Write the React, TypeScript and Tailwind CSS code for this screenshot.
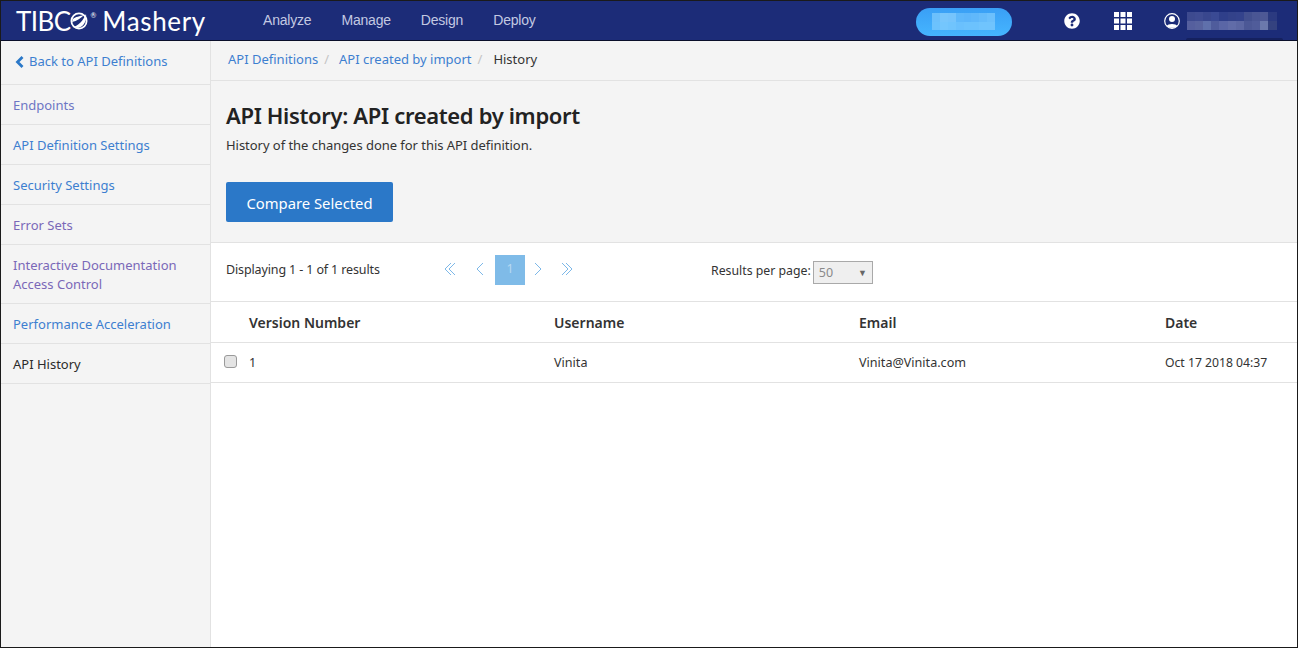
import { FC } from "react";
import { FaQuestionCircle } from "react-icons/fa";

const navItems = ["Analyze", "Manage", "Design", "Deploy"];

const sideItems = [
    { label: "Endpoints", className: "h-10 text-[#6d76c4]" },
    { label: "API Definition Settings", className: "h-10 text-[#3d7fd0]" },
    { label: "Security Settings", className: "h-10 text-[#3d7fd0]" },
    { label: "Error Sets", className: "h-10 text-[#7a68b8]" },
    { label: "Interactive Documentation Access Control", className: "h-[59px] text-[#7a68b8]" },
    { label: "Performance Acceleration", className: "h-10 text-[#3d7fd0]" },
    { label: "API History", className: "h-10 text-[#2b2b2b]" },
];

const userBlur = [
    ["bg-[#3d4a8f]", "bg-[#3f4c92]", "bg-[#39478e]", "bg-[#3a4a94]", "bg-[#2f3f8a]", "bg-[#33428a]", "bg-[#34438c]", "bg-[#43508f]", "bg-[#4a5694]", "bg-[#4d5895]", "bg-[#2b3a80]"],
    ["bg-[#555f9e]", "bg-[#58639f]", "bg-[#5f70ab]", "bg-[#4f5c9c]", "bg-[#5a66a6]", "bg-[#616ca8]", "bg-[#5c67a3]", "bg-[#4c5896]", "bg-[#505c9a]", "bg-[#6b79ac]", "bg-[#34427f]"],
];

const buttonBlur = [
    ["bg-[#6cc0fc]", "bg-[#78c6fc]", "bg-[#76c4fc]", "bg-[#5fb8fb]", "bg-[#5db6fb]", "bg-[#60b8fb]", "bg-[#66bcfb]", "bg-[#6cc0fc]"],
    ["bg-[#6cc2fd]", "bg-[#74c6fd]", "bg-[#70c4fd]", "bg-[#6ac0fd]", "bg-[#6cc2fd]", "bg-[#6cc2fd]", "bg-[#70c4fd]", "bg-[#70c4fd]"],
];

const Logo: FC = () => (
    <div className="ml-[15px] flex w-[247px] items-center pt-px text-white font-['Lato',sans-serif]">
        <span className="text-[26px] leading-none tracking-[-0.6px]">TIBC</span>
        <svg width="18" height="18" viewBox="0 0 18 18">
            <circle cx="9" cy="9" r="7.6" fill="none" stroke="#fff" strokeWidth="1.8" />
            <path d="M3 15 C8 14 13 9 16 2 C17 8 14 15 8 16 Z" fill="#fff" />
            <path d="M2 10 C7 9 11 6 14 3 C10 4 5 5 3 7 Z" fill="#fff" />
        </svg>
        <span className="mb-[11px] ml-[2px] text-[7px] leading-none">®</span>
        <span className="ml-[6px] text-[26px] leading-none tracking-[0.65px]">Mashery</span>
    </div>
);

const UserIcon: FC = () => (
    <svg width="16" height="16" viewBox="0 0 16 16">
        <circle cx="8" cy="8" r="7.3" fill="none" stroke="#fff" strokeWidth="1.2" />
        <circle cx="8" cy="6" r="3" fill="#fff" />
        <path d="M2.8 13 C3.5 10.2 12.5 10.2 13.2 13 C11 15.4 5 15.4 2.8 13 Z" fill="#fff" />
    </svg>
);

const Header: FC = () => (
    <header className="relative flex h-[40px] shrink-0 items-center border-b border-[#0a0f2a] bg-[#1c2c78]">
        <Logo />
        <nav className="flex gap-[30px] font-['Liberation_Sans',sans-serif] text-[14px] tracking-[-0.2px] text-[#c3c9e2]">
            {navItems.map((item) => (
                <span key={item}>{item}</span>
            ))}
        </nav>
        <div className="ml-[380px] mt-[2px] flex h-7 w-24 items-center justify-center rounded-full bg-gradient-to-b from-[#3a9ff5] to-[#45b5ff]">
            <div className="flex h-[17px] w-[63px] flex-col">
                {buttonBlur.map((row, i) => (
                    <div key={i} className="flex flex-1">
                        {row.map((color, j) => (
                            <div key={j} className={`flex-1 ${color}`} />
                        ))}
                    </div>
                ))}
            </div>
        </div>
        <FaQuestionCircle size={16} className="ml-[52px] text-white" />
        <svg width="18" height="18" viewBox="0 0 18 18" className="ml-[34px]" fill="#fff">
            {[0, 6.5, 13].map((y) =>
                [0, 6.5, 13].map((x) => <rect key={`${x}-${y}`} x={x} y={y} width="5" height="5" />)
            )}
        </svg>
        <div className="ml-[32px]">
            <UserIcon />
        </div>
        <div className="ml-[7px] flex w-[90px] flex-col">
            {userBlur.map((row, i) => (
                <div key={i} className="flex">
                    {row.map((color, j) => (
                        <div key={j} className={`h-[9px] flex-1 ${color}`} />
                    ))}
                </div>
            ))}
        </div>
        <div className="absolute bottom-0 left-[1185px] h-[2px] w-[97px] rounded-t-sm bg-[#15215f]" />
    </header>
);

const Sidebar: FC = () => (
    <aside className="w-[210px] shrink-0 border-r border-[#e2e2e2] bg-[#f4f4f4]">
        <div className="flex h-[44px] items-center border-b border-[#e2e2e2] pb-px pl-[14px] text-[#3d7fd0]">
            <svg width="10" height="12" viewBox="0 0 10 12" fill="none" stroke="#2b78c8" strokeWidth="2.8" className="mr-[4px]">
                <polyline points="7.5,1 2.5,6 7.5,11" />
            </svg>
            <span>Back to API Definitions</span>
        </div>
        {sideItems.map((item) => (
            <div
                key={item.label}
                className={`flex items-center border-b border-[#e2e2e2] pl-[12px] pr-5 pt-[2px] leading-[19px] ${item.className}`}
            >
                {item.label}
            </div>
        ))}
    </aside>
);

const Chevron: FC<{ dir: "left" | "right"; double?: boolean; className?: string }> = ({ dir, double, className }) => {
    const flip = dir === "right" ? "scale(-1 1) translate(-12 0)" : undefined;
    return (
        <svg width="12" height="14" viewBox="0 0 12 14" fill="none" stroke="#7db8e8" strokeWidth="1" className={className}>
            <g transform={flip}>
                <polyline points="7,1 1,7 7,13" />
                {double && <polyline points="11,1 5,7 11,13" />}
            </g>
        </svg>
    );
};

const Pager: FC = () => (
    <div className="flex items-center">
        <Chevron dir="left" double className="mb-[2px]" />
        <Chevron dir="left" className="mb-[2px] ml-[20px] mr-[7px]" />
        <div className="flex h-[30px] w-[30px] items-center justify-center bg-[#7fbbe8] pb-px text-[#b7d9f2]">1</div>
        <Chevron dir="right" className="mb-[2px] ml-[5px]" />
        <Chevron dir="right" double className="mb-[2px] ml-[19px]" />
    </div>
);

const Main: FC = () => (
    <main className="flex min-w-0 flex-1 flex-col bg-white">
        <div className="flex h-10 shrink-0 items-center border-b border-[#e2e2e2] bg-[#f4f4f4] pb-px pl-[17px]">
            <span className="text-[#3d7fd0]">API Definitions</span>
            <span className="ml-[6px] text-[#c4c4c4]">/</span>
            <span className="ml-[10px] text-[#3d7fd0]">API created by import</span>
            <span className="ml-[6px] text-[#c4c4c4]">/</span>
            <span className="ml-[11px] text-[#333]">History</span>
        </div>
        <section className="h-[162px] shrink-0 border-b border-[#e2e2e2] bg-[#f4f4f4] pl-[15px] pt-[19px]">
            <h1 className="text-[22px] font-semibold leading-[30px] tracking-[-0.34px] text-[#222]">
                API History: API created by import
            </h1>
            <p className="mt-[5px] leading-5 tracking-[-0.04px] text-[#333]">
                History of the changes done for this API definition.
            </p>
            <button className="mt-[27px] h-10 w-[167px] rounded-[2px] bg-[#2b78c8] pt-[2px] text-[14.8px] text-white">
                Compare Selected
            </button>
        </section>
        <div className="flex h-[59px] shrink-0 items-center border-b border-[#e2e2e2] pb-[4px] pl-[15px] text-[12.5px] text-[#333]">
            <span className="w-[218px] tracking-[-0.13px]">Displaying 1 - 1 of 1 results</span>
            <Pager />
            <span className="ml-[138px] pt-[3px] text-[12.3px]">Results per page:</span>
            <div className="ml-[2px] mt-[5px] flex h-[23px] w-[60px] items-center justify-between border border-[#a9a9a9] bg-[#efefef] pl-[5px] pr-[5px] text-[#8a8a8a]">
                <span className="pt-[2px]">50</span>
                <span className="text-[9px] text-[#666]">▼</span>
            </div>
        </div>
        <div className="flex h-[41px] shrink-0 items-center border-b border-[#e2e2e2] text-[14px] font-semibold text-[#333]">
            <span className="ml-[38px] w-[305px]">Version Number</span>
            <span className="w-[305px]">Username</span>
            <span className="w-[306px]">Email</span>
            <span>Date</span>
        </div>
        <div className="flex h-10 shrink-0 items-center border-b border-[#e2e2e2] text-[12.6px] text-[#333]">
            <div className="ml-[13px] mb-[3px] h-[13px] w-[13px] rounded-[3px] border border-[#9a9a9a] bg-[#e4e4e4]" />
            <span className="ml-[12px] w-[305px] pt-px">1</span>
            <span className="w-[305px] pt-px">Vinita</span>
            <span className="w-[306px] pt-px">Vinita@Vinita.com</span>
            <span className="pt-px text-[12.2px]">Oct 17 2018 04:37</span>
        </div>
    </main>
);

export default function App() {
    return (
        <div className="flex h-[648px] w-[1298px] flex-col overflow-hidden border border-[#1a1a1a] font-['Noto_Sans',sans-serif] text-[13px]">
            <Header />
            <div className="flex min-h-0 flex-1">
                <Sidebar />
                <Main />
            </div>
        </div>
    );
}
